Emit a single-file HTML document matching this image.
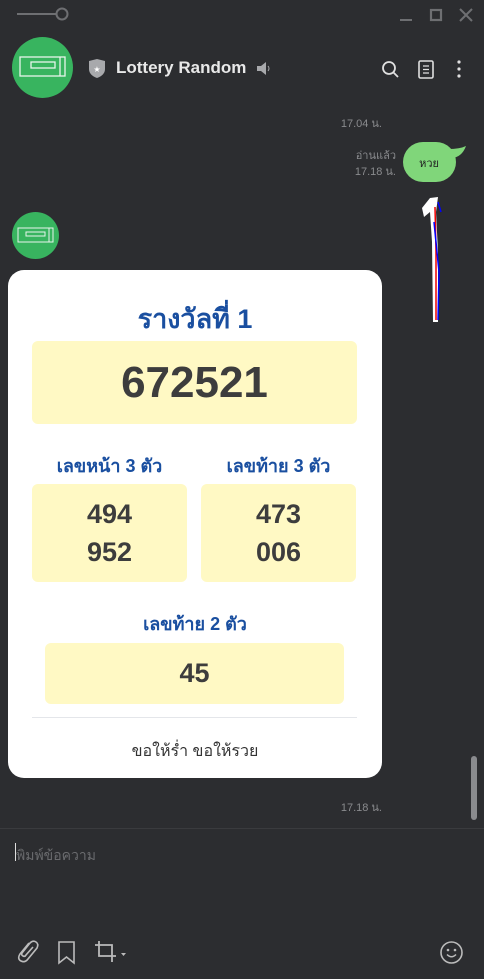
<!DOCTYPE html>
<html><head><meta charset="utf-8"><style>
*{margin:0;padding:0;box-sizing:border-box}
body{width:484px;height:979px;background:#2c2d30;font-family:"Liberation Sans",sans-serif;position:relative;overflow:hidden;color:#fff}
.abs{position:absolute}
.av{position:absolute;border-radius:50%;background:#38b45f}
.card{position:absolute;left:8px;top:270px;width:374px;height:508px;background:#fff;border-radius:16px}
.y{position:absolute;background:#fff9c4;border-radius:6px;color:#3d3d3d;font-weight:bold;text-align:center}
.lbl{position:absolute;color:#1a4fa0;font-weight:bold;font-size:18px;text-align:center}
.t{color:#8a8b8e;font-size:11px;position:absolute;text-align:right}
</style></head><body>
<svg class="abs" style="left:0;top:0" width="484" height="30">
<line x1="17" y1="14" x2="56" y2="14" stroke="#6e6f72" stroke-width="2"/>
<circle cx="62" cy="14" r="5.5" fill="none" stroke="#6e6f72" stroke-width="2"/>
<line x1="400" y1="20" x2="412" y2="20" stroke="#6e6f72" stroke-width="2"/>
<rect x="431" y="10" width="10" height="10" fill="none" stroke="#6e6f72" stroke-width="2.2"/>
<path d="M460 9l12 12M472 9l-12 12" stroke="#6e6f72" stroke-width="2"/>
</svg>
<div class="av" style="left:12px;top:37px;width:61px;height:61px"></div>
<svg class="abs" style="left:12px;top:37px" width="61" height="61"><rect x="8" y="20" width="45" height="19" fill="none" stroke="#e8f5ec" stroke-width="1.3"/><rect x="19" y="25" width="24" height="6" fill="none" stroke="#e8f5ec" stroke-width="1.3"/><line x1="48" y1="20" x2="48" y2="39" stroke="#e8f5ec" stroke-width="1.3"/></svg>
<svg class="abs" style="left:88px;top:59px" width="18" height="20"><path d="M1 2 L9 0 L17 2 L17 10 Q17 16 9 19 Q1 16 1 10Z" fill="#a8a9ac"/><text x="9" y="13" font-size="8" fill="#fff" text-anchor="middle">★</text></svg>
<div class="abs" style="left:116px;top:58px;font-size:17px;font-weight:bold;color:#e8e8e8">Lottery Random</div>
<svg class="abs" style="left:256px;top:61px" width="16" height="15"><path d="M1 5h4l5-4v13l-5-4H1z" fill="#a8a9ac"/><path d="M12 5q2 2.5 0 5" stroke="#a8a9ac" fill="none"/></svg>
<svg class="abs" style="left:380px;top:59px" width="90" height="22">
<circle cx="9" cy="9" r="6" fill="none" stroke="#e0e0e0" stroke-width="1.8"/><line x1="13.5" y1="13.5" x2="18" y2="18" stroke="#e0e0e0" stroke-width="1.8"/>
<rect x="39" y="2" width="14" height="17" rx="1.5" fill="none" stroke="#e0e0e0" stroke-width="1.6"/><path d="M43 7h6M43 10.5h6M43 14h6" stroke="#e0e0e0" stroke-width="1.3"/>
<circle cx="79" cy="3" r="1.6" fill="#e0e0e0"/><circle cx="79" cy="10" r="1.6" fill="#e0e0e0"/><circle cx="79" cy="17" r="1.6" fill="#e0e0e0"/>
</svg>
<div class="t" style="left:300px;top:114px;width:82px">17.04 น.</div>
<div class="t" style="left:300px;top:148px;width:96px;line-height:16px">อ่านแล้ว<br>17.18 น.</div>
<svg class="abs" style="left:402px;top:141px" width="66" height="42"><rect x="1" y="1" width="53" height="40" rx="20" fill="#80d67a"/><path d="M46 8 Q58 8 64 5 Q60 16 50 17Z" fill="#80d67a"/></svg>
<div class="abs" style="left:403px;top:154px;width:52px;text-align:center;font-size:11px;color:#222">หวย</div>
<svg class="abs" style="left:414px;top:192px" width="36" height="134"><path d="M19 130 L18 50 L16 20 L10 25 L8 16 L16 6 L24 5 L22 20 L24 60 L24 130Z" fill="#fff"/><path d="M21 15 L22 60 L22 128" stroke="#e00" stroke-width="1.5" fill="none"/><path d="M24 10 L27 20 M20 30 L25 80 L24 128" stroke="#00f" stroke-width="1.5" fill="none"/></svg>
<div class="av" style="left:12px;top:212px;width:47px;height:47px"></div>
<svg class="abs" style="left:12px;top:212px" width="47" height="47"><rect x="6" y="16" width="35" height="14" fill="none" stroke="#e8f5ec" stroke-width="1"/><rect x="14" y="20" width="19" height="4" fill="none" stroke="#e8f5ec" stroke-width="1"/><line x1="37" y1="16" x2="37" y2="30" stroke="#e8f5ec"/></svg>
<div class="card">
<div class="lbl" style="left:0;top:27px;width:374px;font-size:27px">รางวัลที่ 1</div>
<div class="y" style="left:24px;top:71px;width:325px;height:83px;font-size:44px;line-height:83px">672521</div>
<div class="lbl" style="left:24px;top:181px;width:155px">เลขหน้า 3 ตัว</div>
<div class="lbl" style="left:193px;top:181px;width:155px">เลขท้าย 3 ตัว</div>
<div class="y" style="left:24px;top:214px;width:155px;height:98px;font-size:27px;line-height:38px;padding-top:11px">494<br>952</div>
<div class="y" style="left:193px;top:214px;width:155px;height:98px;font-size:27px;line-height:38px;padding-top:11px">473<br>006</div>
<div class="lbl" style="left:0;top:339px;width:374px">เลขท้าย 2 ตัว</div>
<div class="y" style="left:37px;top:373px;width:299px;height:61px;font-size:27px;line-height:61px">45</div>
<div class="abs" style="left:24px;top:447px;width:325px;height:1px;background:#e4e6ea"></div>
<div class="abs" style="left:0;top:469px;width:374px;text-align:center;color:#333;font-size:16px">ขอให้รํ่า ขอให้รวย</div>
</div>
<div class="t" style="left:300px;top:798px;width:82px">17.18 น.</div>
<div class="abs" style="left:471px;top:756px;width:6px;height:64px;border-radius:3px;background:#8a8b8e"></div>
<div class="abs" style="left:0;top:828px;width:484px;height:1px;background:#3a3b3e"></div>
<div class="abs" style="left:15px;top:843px;width:1px;height:18px;background:#ddd"></div>
<div class="abs" style="left:16px;top:845px;font-size:14px;color:#6a6b6e">พิมพ์ข้อความ</div>
<svg class="abs" style="left:16px;top:937px" width="120" height="30">
<path d="M13 6 L4 17 Q1 22 5 24 Q9 26 12 22 L21 11 Q23 7 20 5 Q17 3 14 6 L6 16 Q5 18 7 19 Q9 20 10 18 L17 10" fill="none" stroke="#bbb" stroke-width="1.6"/>
<path d="M43 5 H58 V26 L50.5 20 L43 26Z" fill="none" stroke="#bbb" stroke-width="1.6"/>
<path d="M83 4 V19 H100 M79 8 H96 V25" fill="none" stroke="#bbb" stroke-width="1.8"/>
<path d="M105 16 h5 l-2.5 3z" fill="#bbb"/>
</svg>
<svg class="abs" style="left:439px;top:940px" width="25" height="25"><circle cx="12.5" cy="12.5" r="10.5" fill="none" stroke="#bbb" stroke-width="1.6"/><circle cx="9" cy="10" r="1.3" fill="#bbb"/><circle cx="16" cy="10" r="1.3" fill="#bbb"/><path d="M8 14.5 Q12.5 19 17 14.5" fill="none" stroke="#bbb" stroke-width="1.5"/></svg>
</body></html>
